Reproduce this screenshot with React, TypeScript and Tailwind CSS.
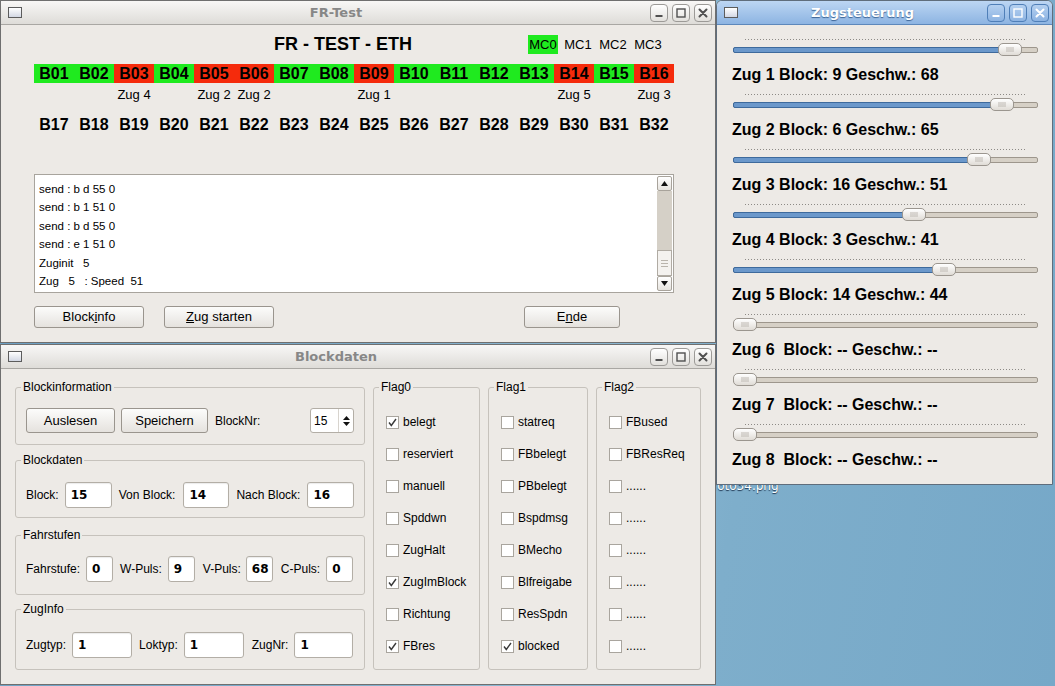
import React from 'react';

const sans = "font-['Liberation_Sans',Arial,sans-serif]";
const deja = "font-['DejaVu_Sans',sans-serif]";

const GREEN = 'bg-[#1fea1f]';
const RED = 'bg-[#f52b0c]';

const topBlocks: [string, boolean, string][] = [
  ['B01', true, ''], ['B02', true, ''], ['B03', false, 'Zug 4'], ['B04', true, ''],
  ['B05', false, 'Zug 2'], ['B06', false, 'Zug 2'], ['B07', true, ''], ['B08', true, ''],
  ['B09', false, 'Zug 1'], ['B10', true, ''], ['B11', true, ''], ['B12', true, ''],
  ['B13', true, ''], ['B14', false, 'Zug 5'], ['B15', true, ''], ['B16', false, 'Zug 3'],
];

const bottomBlocks = Array.from({ length: 16 }, (_, i) => `B${i + 17}`);

const logLines = [
  'send : b d 55 0',
  'send : b 1 51 0',
  'send : b d 55 0',
  'send : e 1 51 0',
  'Zuginit   5',
  'Zug   5   : Speed  51',
];

const flags: { title: string; w: string; items: [string, boolean][] }[] = [
  {
    title: 'Flag0',
    w: 'w-[107px]',
    items: [
      ['belegt', true], ['reserviert', false], ['manuell', false], ['Spddwn', false],
      ['ZugHalt', false], ['ZugImBlock', true], ['Richtung', false], ['FBres', true],
    ],
  },
  {
    title: 'Flag1',
    w: 'w-[100px]',
    items: [
      ['statreq', false], ['FBbelegt', false], ['PBbelegt', false], ['Bspdmsg', false],
      ['BMecho', false], ['Blfreigabe', false], ['ResSpdn', false], ['blocked', true],
    ],
  },
  {
    title: 'Flag2',
    w: 'w-[105px]',
    items: [
      ['FBused', false], ['FBResReq', false], ['......', false], ['......', false],
      ['......', false], ['......', false], ['......', false], ['......', false],
    ],
  },
];

const trains = [
  { label: 'Zug 1 Block: 9 Geschw.: 68', pos: 265 },
  { label: 'Zug 2 Block: 6 Geschw.: 65', pos: 257 },
  { label: 'Zug 3 Block: 16 Geschw.: 51', pos: 234 },
  { label: 'Zug 4 Block: 3 Geschw.: 41', pos: 169 },
  { label: 'Zug 5 Block: 14 Geschw.: 44', pos: 199 },
  { label: 'Zug 6  Block: -- Geschw.: --', pos: 0 },
  { label: 'Zug 7  Block: -- Geschw.: --', pos: 0 },
  { label: 'Zug 8  Block: -- Geschw.: --', pos: 0 },
];

const TitleButton = ({ kind, active }: { kind: 'min' | 'max' | 'close'; active?: boolean }) => {
  const stroke = active ? '#ffffff' : '#505050';
  return (
    <div
      className={
        active
          ? 'flex h-[18px] w-[18px] items-center justify-center rounded-[4px] border border-[#4f7fb8] bg-[linear-gradient(#b4d0f0,#8cb3e2)]'
          : 'flex h-[18px] w-[18px] items-center justify-center rounded-[4px] border border-[#9c9a97] bg-[linear-gradient(#ffffff,#e2e0dc)]'
      }
    >
      <svg width="10" height="10" viewBox="0 0 10 10">
        {kind === 'min' && <rect x="1.5" y="7" width="7" height="2" fill={stroke} />}
        {kind === 'max' && <rect x="1" y="1" width="8" height="8" fill="none" stroke={stroke} strokeWidth="1.4" />}
        {kind === 'close' && (
          <path d="M1.5 1.5 L8.5 8.5 M8.5 1.5 L1.5 8.5" stroke={stroke} strokeWidth="2" strokeLinecap="round" />
        )}
      </svg>
    </div>
  );
};

const TitleBar = ({ title, active }: { title: string; active?: boolean }) => (
  <div
    className={
      active
        ? 'flex h-[24px] shrink-0 items-center rounded-t-[5px] border-b border-[#5d88bb] bg-[linear-gradient(#bcd6f3,#8db4e2)] pl-[7px] pr-[3px]'
        : 'flex h-[24px] shrink-0 items-center border-b border-[#a9a7a3] bg-[linear-gradient(#f8f7f6,#dedcd8)] pl-[7px] pr-[3px]'
    }
  >
    <div className="h-[11px] w-[14px] border border-[#5c5c5c] bg-[linear-gradient(#ffffff,#d3d8e4)]" />
    <div
      className={`${deja} flex-1 text-center text-[13px] font-bold ${
        active ? 'text-white [text-shadow:0_1px_1px_#3a6293]' : 'text-[#878787]'
      }`}
    >
      {title}
    </div>
    <div className="flex gap-[4px]">
      <TitleButton kind="min" active={active} />
      <TitleButton kind="max" active={active} />
      <TitleButton kind="close" active={active} />
    </div>
  </div>
);

const Button = ({ className, children }: { className: string; children: React.ReactNode }) => (
  <div
    className={`flex items-center justify-center rounded-[3px] border border-[#9a958e] bg-[linear-gradient(#fcfcfb,#e5e2de)] text-[13px] text-black ${className}`}
  >
    {children}
  </div>
);

const Field = ({ value, w }: { value: string; w: string }) => (
  <div
    className={`${deja} flex h-[26px] items-center rounded-[3px] border border-[#b3aea6] bg-white pl-[5px] text-[12px] font-bold text-black shadow-[inset_0_1px_1px_rgba(0,0,0,0.08)] ${w}`}
  >
    {value}
  </div>
);

const Group = ({ title, className, inner, children }: {
  title: string; className?: string; inner: string; children: React.ReactNode;
}) => (
  <fieldset className={`rounded-[3px] border border-[#c6c2bc] ${className ?? ''}`}>
    <legend className="ml-[5px] px-[2px] text-[12px] leading-[14px] text-black">{title}</legend>
    <div className={inner}>{children}</div>
  </fieldset>
);

const Check = ({ label, checked }: { label: string; checked: boolean }) => (
  <div className="flex h-[32px] items-center">
    <div className="flex h-[13px] w-[13px] items-center justify-center border border-[#a9a59e] bg-white">
      {checked && (
        <svg width="11" height="11" viewBox="0 0 11 11">
          <path d="M2 5.5 L4.3 8.5 L9 2" fill="none" stroke="#3a3a3a" strokeWidth="1.4" />
        </svg>
      )}
    </div>
    <span className="ml-[4px] text-[12px] text-black">{label}</span>
  </div>
);

const Slider = ({ pos }: { pos: number }) => (
  <div className="relative ml-[16px] mt-[3px] h-[13px] w-[305px]">
    <div className="absolute left-0 right-0 top-[4px] h-[6px] rounded-[2px] border border-[#9d968c] bg-[#d6d0c6]" />
    {pos > 0 && (
      <div
        className="absolute left-0 top-[4px] h-[6px] rounded-[2px] border border-[#3e6a9c] bg-[#6b98cb]"
        style={{ width: pos + 12 }}
      />
    )}
    <div
      className="absolute top-0 flex h-[13px] w-[24px] items-center justify-center rounded-[5px] border border-[#9b968f] bg-[linear-gradient(#ffffff,#e0dcd6)]"
      style={{ left: pos }}
    >
      <div className="h-[5px] w-[8px] bg-[radial-gradient(#b9b4ad_0.6px,transparent_0.8px)] bg-[length:2px_2px]" />
    </div>
  </div>
);

const ScrollBar = () => (
  <div className="my-[1px] mr-[1px] flex w-[15px] flex-col">
    <div className="flex h-[15px] items-center justify-center rounded-[2px] border border-[#a8a39b] bg-[linear-gradient(#ffffff,#e6e3de)]">
      <svg width="7" height="5" viewBox="0 0 7 5"><path d="M0 5 L3.5 0 L7 5Z" fill="#111" /></svg>
    </div>
    <div className="flex-1 bg-[#d5d0c7]" />
    <div className="flex h-[26px] flex-col items-center justify-center gap-[2px] border border-[#b0aba3] bg-[#f4f2ef]">
      <div className="h-px w-[7px] bg-[#b9b4ac]" />
      <div className="h-px w-[7px] bg-[#b9b4ac]" />
      <div className="h-px w-[7px] bg-[#b9b4ac]" />
    </div>
    <div className="flex h-[15px] items-center justify-center rounded-[2px] border border-[#a8a39b] bg-[linear-gradient(#ffffff,#e6e3de)]">
      <svg width="7" height="5" viewBox="0 0 7 5"><path d="M0 0 L7 0 L3.5 5Z" fill="#111" /></svg>
    </div>
  </div>
);

const FrTest = () => (
  <div className={`absolute left-0 top-0 flex h-[343px] w-[716px] flex-col border border-[#6f6f6f] bg-[#edeae6] ${sans}`}>
    <TitleBar title="FR-Test" />
    <div className="flex-1">
      <div className="mt-[7px] flex h-[24px] items-center">
        <div className="w-[527px] pl-[273px] text-[18px] font-bold text-black">FR - TEST - ETH</div>
        <div className="flex gap-[5px] text-[13px] text-black">
          {['MC0', 'MC1', 'MC2', 'MC3'].map((m, i) => (
            <div key={m} className={`h-[19px] w-[30px] text-center leading-[19px] ${i === 0 ? GREEN : ''}`}>{m}</div>
          ))}
        </div>
      </div>

      <div className="ml-[33px] mt-[8px] flex">
        {topBlocks.map(([name, free]) => (
          <div key={name} className={`h-[19px] w-[40px] text-center text-[16px] font-bold leading-[19px] text-black ${free ? GREEN : RED}`}>
            {name}
          </div>
        ))}
      </div>
      <div className="ml-[33px] mt-[4px] flex h-[16px]">
        {topBlocks.map(([name, , zug]) => (
          <div key={name} className="w-[40px] text-center text-[13px] leading-[16px] text-black">{zug}</div>
        ))}
      </div>
      <div className="ml-[33px] mt-[12px] flex">
        {bottomBlocks.map((name) => (
          <div key={name} className="h-[19px] w-[40px] text-center text-[16px] font-bold leading-[19px] text-black">{name}</div>
        ))}
      </div>

      <div className="ml-[33px] mt-[40px] flex h-[119px] w-[640px] border border-[#a8a49d] bg-white">
        <div className="flex-1 pl-[4px] pt-[5px] text-[11.5px] leading-[18.4px] text-black">
          {logLines.map((l, i) => (
            <div key={i} className="whitespace-pre">{l}</div>
          ))}
        </div>
        <ScrollBar />
      </div>

      <div className="ml-[33px] mt-[13px] flex">
        <Button className="h-[22px] w-[110px]">Block<span className="underline">i</span>nfo</Button>
        <Button className="ml-[20px] h-[22px] w-[110px]"><span className="underline">Z</span>ug starten</Button>
        <Button className="ml-[250px] h-[22px] w-[96px]">E<span className="underline">n</span>de</Button>
      </div>
    </div>
  </div>
);

const Blockdaten = () => (
  <div className={`absolute left-0 top-[344px] flex h-[341px] w-[716px] flex-col border border-[#6f6f6f] bg-[#edeae6] ${sans}`}>
    <TitleBar title="Blockdaten" />
    <div className="flex gap-[8px] pl-[14px] pt-[11px] text-[12px] text-black">
      <div className="flex w-[350px] flex-col">
        <Group title="Blockinformation" inner="flex items-center px-[10px] pb-[11px] pt-[14px]">
          <Button className="h-[25px] w-[89px] text-[12px]">Auslesen</Button>
          <Button className="ml-[6px] h-[25px] w-[87px] text-[12px]">Speichern</Button>
          <span className="ml-[7px]">BlockNr:</span>
          <div className="ml-auto flex h-[25px] w-[44px] items-center rounded-[3px] border border-[#b3aea6] bg-white">
            <span className="flex-1 pl-[3px] text-[12px]">15</span>
            <div className="flex h-full w-[15px] flex-col items-center justify-center gap-[2px] border-l border-[#d8d4ce]">
              <svg width="7" height="4" viewBox="0 0 7 4"><path d="M0 4 L3.5 0 L7 4Z" fill="#111" /></svg>
              <svg width="7" height="4" viewBox="0 0 7 4"><path d="M0 0 L7 0 L3.5 4Z" fill="#111" /></svg>
            </div>
          </div>
        </Group>

        <Group title="Blockdaten" className="mt-[8px]" inner="flex items-center pl-[10px] pb-[9px] pt-[15px]">
          <span>Block:</span>
          <div className="ml-[6px]"><Field value="15" w="w-[47px]" /></div>
          <span className="ml-[7px]">Von Block:</span>
          <div className="ml-[8px]"><Field value="14" w="w-[46px]" /></div>
          <span className="ml-[7px]">Nach Block:</span>
          <div className="ml-[7px]"><Field value="16" w="w-[47px]" /></div>
        </Group>

        <Group title="Fahrstufen" className="mt-[10px]" inner="flex items-center pl-[10px] pb-[12px] pt-[14px]">
          <span>Fahrstufe:</span>
          <div className="ml-[6px]"><Field value="0" w="w-[27px]" /></div>
          <span className="ml-[7px]">W-Puls:</span>
          <div className="ml-[6px]"><Field value="9" w="w-[27px]" /></div>
          <span className="ml-[8px]">V-Puls:</span>
          <div className="ml-[5px]"><Field value="68" w="w-[27px]" /></div>
          <span className="ml-[8px]">C-Puls:</span>
          <div className="ml-[6px]"><Field value="0" w="w-[27px]" /></div>
        </Group>

        <Group title="ZugInfo" className="mt-[7px]" inner="flex items-center pl-[10px] pb-[11px] pt-[16px]">
          <span>Zugtyp:</span>
          <div className="ml-[6px]"><Field value="1" w="w-[60px]" /></div>
          <span className="ml-[7px]">Loktyp:</span>
          <div className="ml-[6px]"><Field value="1" w="w-[60px]" /></div>
          <span className="ml-[8px]">ZugNr:</span>
          <div className="ml-[6px]"><Field value="1" w="w-[59px]" /></div>
        </Group>
      </div>

      {flags.map((f) => (
        <Group key={f.title} title={f.title} className={`h-[290px] ${f.w}`} inner="pl-[12px] pt-[12px]">
          {f.items.map(([label, checked], i) => (
            <Check key={i} label={label} checked={checked} />
          ))}
        </Group>
      ))}
    </div>
  </div>
);

const Zugsteuerung = () => (
  <div className={`absolute left-[716px] top-0 flex h-[485px] w-[337px] flex-col rounded-t-[6px] border border-[#5f6d7c] bg-[#edeae6] ${sans}`}>
    <TitleBar title="Zugsteuerung" active />
    <div className="pt-[14px]">
      {trains.map((t) => (
        <div key={t.label} className="mb-[9px]">
          <div className="ml-[28px] h-px w-[282px] bg-[repeating-linear-gradient(90deg,#8d8a86_0_1px,transparent_1px_3px)]" />
          <Slider pos={t.pos} />
          <div className="ml-[15px] mt-[9px] h-[20px] whitespace-pre text-[16px] font-bold leading-[20px] text-black">{t.label}</div>
        </div>
      ))}
    </div>
  </div>
);

export default function App() {
  return (
    <div className="relative h-[686px] w-[1055px] overflow-hidden bg-[linear-gradient(100deg,#6a9fc3_0%,#7cacca_35%,#8cb8d2_55%,#7eaecb_70%,#76a8c8_100%)]">
      <div className={`absolute left-[713px] top-[477px] text-[12px] text-white [text-shadow:0_1px_1px_#1d3550] ${deja}`}>
        foto34.png
      </div>
      <FrTest />
      <Blockdaten />
      <Zugsteuerung />
    </div>
  );
}
